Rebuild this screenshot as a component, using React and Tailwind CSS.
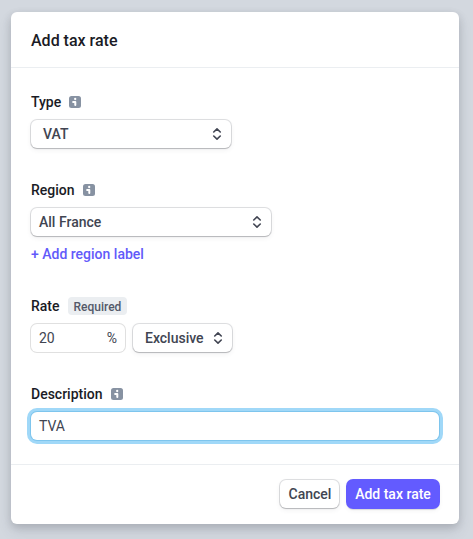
import React from "react";

const raised =
  "bg-white rounded-[6px] shadow-[0_0_0_1px_rgba(64,68,82,0.16),0_2px_5px_0_rgba(64,68,82,0.08),0_1px_1px_0_rgba(0,0,0,0.16)]";

function InfoIcon() {
  return (
    <svg width="12" height="12" viewBox="0 0 12 12" className="block shrink-0">
      <rect width="12" height="12" rx="2.5" fill="#8792a2" />
      <circle cx="6.2" cy="3" r="1.15" fill="#fff" />
      <path d="M4.1 5h2.2a1 1 0 0 1 1 1v3a1 1 0 0 1-2 0V6.9H4.1a.95.95 0 0 1 0-1.9z" fill="#fff" />
    </svg>
  );
}

function Chevrons() {
  return (
    <svg
      width="12"
      height="12"
      viewBox="0 0 12 12"
      className="block shrink-0"
      fill="none"
      stroke="#414552"
      strokeWidth="1.6"
      strokeLinecap="round"
      strokeLinejoin="round"
    >
      <path d="M2.75 4 6 .9 9.25 4M2.75 8 6 11.1 9.25 8" />
    </svg>
  );
}

function Label({ children, badge }) {
  return (
    <div className="flex h-5 items-center gap-2 font-medium text-[#1a1b25]">
      <span>{children}</span>
      {badge ? (
        <span className="flex h-[18px] items-center rounded bg-[#ebeef1] px-[6px] pt-[2px] text-xs text-[#545969]">
          {badge}
        </span>
      ) : (
        <InfoIcon />
      )}
    </div>
  );
}

export default function App() {
  return (
    <div className="h-[539px] w-[473px] bg-[#d3d8df] pt-3 pl-[11px] font-[Roboto,'Liberation_Sans',sans-serif] text-sm leading-5 text-[#414552]">
      <div className="flex h-[512px] w-[448px] flex-col rounded-md bg-white shadow-[0_7px_14px_0_rgba(60,66,87,0.12),0_3px_8px_0_rgba(0,0,0,0.14)]">
        <header className="flex h-14 items-center border-b border-[#ebeef1] px-5 pt-[3px]">
          <h1 className="text-base font-medium text-[#1a1b25]">Add tax rate</h1>
        </header>

        <main className="flex flex-1 flex-col px-5 pt-6">
          <Label>Type</Label>
          <div className={`${raised} mt-2 flex h-7 w-[200px] items-center justify-between pr-2 pl-3 font-medium`}>
            VAT <Chevrons />
          </div>

          <div className="mt-8">
            <Label>Region</Label>
          </div>
          <div className={`${raised} mt-2 flex h-7 w-[240px] items-center justify-between px-2 font-medium`}>
            All France <Chevrons />
          </div>
          <div className="mt-2 font-medium text-[#625afa]">+ Add region label</div>

          <div className="mt-8">
            <Label badge="Required">Rate</Label>
          </div>
          <div className="mt-2 flex gap-2">
            <div className="flex h-7 w-[94px] items-center justify-between rounded-[6px] px-2 shadow-[0_0_0_1px_#e0e0e0]">
              <span>20</span>
              <span>%</span>
            </div>
            <div className={`${raised} flex h-7 w-[99px] items-center justify-between pr-2 pl-3 font-medium`}>
              Exclusive <Chevrons />
            </div>
          </div>

          <div className="mt-8">
            <Label>Description</Label>
          </div>
          <div className="mt-2 flex h-7 items-center rounded-[6px] bg-white px-2 shadow-[0_0_0_1px_rgba(50,151,211,0.3),0_0_0_4px_#a0d8f8]">
            TVA
          </div>
        </main>

        <footer className="flex h-[60px] items-start justify-end gap-2 border-t border-[#ebeef1] px-5 pt-[15px] font-medium">
          <button className={`${raised} h-7 w-[59px] pl-px`}>Cancel</button>
          <button className="h-7 w-[92px] rounded-[6px] bg-[#635bff] text-white shadow-[0_0_0_1px_#635bff,0_2px_5px_0_rgba(64,68,82,0.08),0_2px_1px_0_rgba(0,0,0,0.12)]">
            Add tax rate
          </button>
        </footer>
      </div>
    </div>
  );
}
